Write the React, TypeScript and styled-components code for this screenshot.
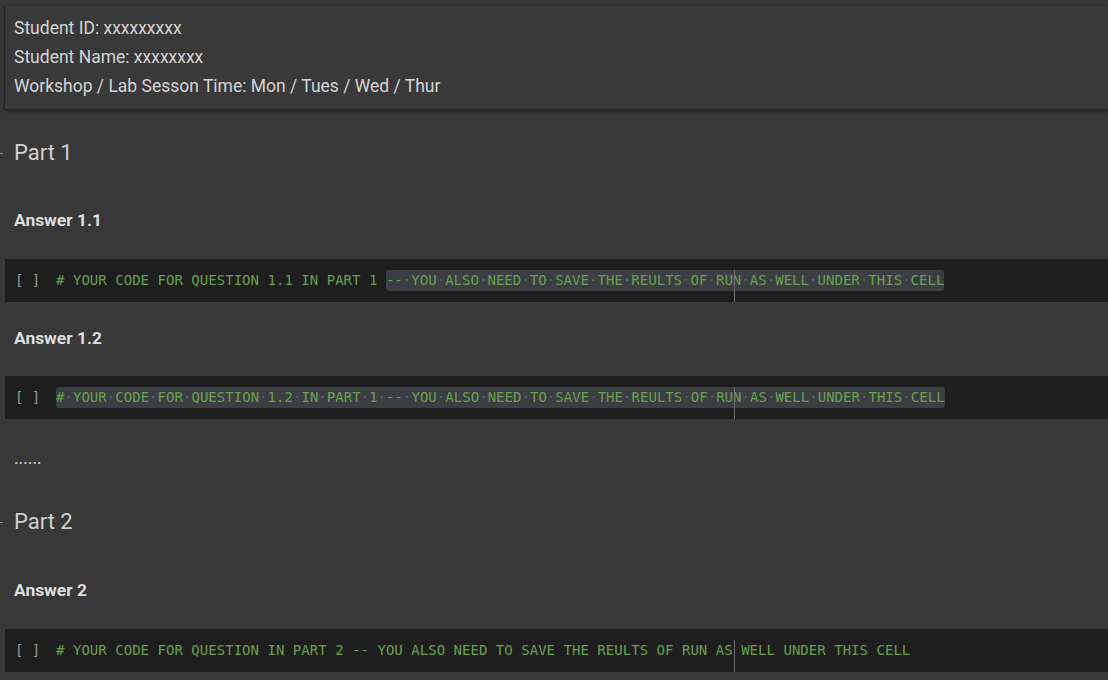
import React from "react";
import styled, { createGlobalStyle } from "styled-components";

const Global = createGlobalStyle`
  html, body { margin: 0; padding: 0; background: #383838; }
  body { width: 1108px; height: 680px; overflow: hidden; font-family: Roboto, "Noto Sans", sans-serif; }
`;

const Page = styled.div`
  display: flex;
  flex-direction: column;
  width: 1108px;
  height: 680px;
  background: #383838;
  color: #d4d4d4;
`;

const InfoBox = styled.div`
  margin: 6px 0 0 5px;
  padding: 8px 9px 8px 9px;
  background: #393939;
  box-shadow: 0 2px 3px rgba(0, 0, 0, 0.45), -1px 0 1px rgba(0, 0, 0, 0.25);
  display: flex;
  flex-direction: column;
`;

const InfoLine = styled.div`
  font-size: 17.5px;
  line-height: 29px;
  color: #d4d4d4;
`;

const Heading = styled.div<{ $mt: number }>`
  position: relative;
  margin-top: ${(p) => p.$mt}px;
  padding-left: 14px;
  font-size: 22px;
  line-height: 32px;
  color: #d0d0d0;
  &::before {
    content: "";
    position: absolute;
    left: 0;
    top: 16px;
    width: 3px;
    height: 1px;
    background: #8a8a8a;
  }
`;

const SubHeading = styled.div<{ $mt: number }>`
  margin-top: ${(p) => p.$mt}px;
  padding-left: 14px;
  font-size: 17.4px;
  font-weight: 700;
  line-height: 24px;
  color: #dedede;
`;

const Text = styled.div<{ $mt: number }>`
  margin-top: ${(p) => p.$mt}px;
  padding-left: 14px;
  font-size: 17.5px;
  line-height: 24px;
  color: #d4d4d4;
`;

const Cell = styled.div<{ $mt: number }>`
  margin: ${(p) => p.$mt}px 0 0 5px;
  height: 43px;
  box-sizing: border-box;
  padding: 11px 0 0 10px;
  background: #1e1e1e;
  display: flex;
  align-items: flex-start;
  font-family: "DejaVu Sans Mono", "Liberation Mono", monospace;
  font-size: 14px;
`;

const Gutter = styled.div`
  width: 41px;
  flex: none;
  line-height: 21px;
  color: #9a9a9a;
  white-space: pre;
`;

const CodeLine = styled.div`
  position: relative;
  line-height: 21px;
  height: 21px;
  color: #6a9f50;
  white-space: pre;
  letter-spacing: 0.03px;
`;

const Ruler = styled.span`
  position: absolute;
  left: 678px;
  top: 0;
  bottom: -11px;
  width: 1px;
  background: #6e6e6e;
`;

const Highlight = styled.span`
  background: #3b3e43;
  border-radius: 3px;
  display: inline-block;
  height: 21px;
`;

const Dot = styled.span`
  color: rgba(190, 195, 190, 0.3);
`;

function Spaced({ text }: { text: string }) {
  const parts = text.split(" ");
  return (
    <>
      {parts.map((w, i) => (
        <React.Fragment key={i}>
          {w}
          {i < parts.length - 1 && <Dot>·</Dot>}
        </React.Fragment>
      ))}
    </>
  );
}

const TAIL = "-- YOU ALSO NEED TO SAVE THE REULTS OF RUN AS WELL UNDER THIS CELL";

export default function App() {
  return (
    <Page>
      <Global />
      <InfoBox>
        <InfoLine>Student ID: xxxxxxxxx</InfoLine>
        <InfoLine>Student Name: xxxxxxxx</InfoLine>
        <InfoLine>Workshop / Lab Sesson Time: Mon / Tues / Wed / Thur</InfoLine>
      </InfoBox>

      <Heading $mt={28}>Part 1</Heading>
      <SubHeading $mt={39}>Answer 1.1</SubHeading>
      <Cell $mt={27}>
        <Gutter>[ ]</Gutter>
        <CodeLine>
          {"# YOUR CODE FOR QUESTION 1.1 IN PART 1 "}
          <Highlight>
            <Spaced text={TAIL} />
          </Highlight>
          <Ruler />
        </CodeLine>
      </Cell>

      <SubHeading $mt={24}>Answer 1.2</SubHeading>
      <Cell $mt={26}>
        <Gutter>[ ]</Gutter>
        <CodeLine>
          <Highlight>
            <Spaced text={"# YOUR CODE FOR QUESTION 1.2 IN PART 1 " + TAIL} />
          </Highlight>
          <Ruler />
        </CodeLine>
      </Cell>

      <Text $mt={27}>......</Text>

      <Heading $mt={36}>Part 2</Heading>
      <SubHeading $mt={40}>Answer 2</SubHeading>
      <Cell $mt={27}>
        <Gutter>[ ]</Gutter>
        <CodeLine>
          {"# YOUR CODE FOR QUESTION IN PART 2 " + TAIL}
          <Ruler />
        </CodeLine>
      </Cell>
    </Page>
  );
}
